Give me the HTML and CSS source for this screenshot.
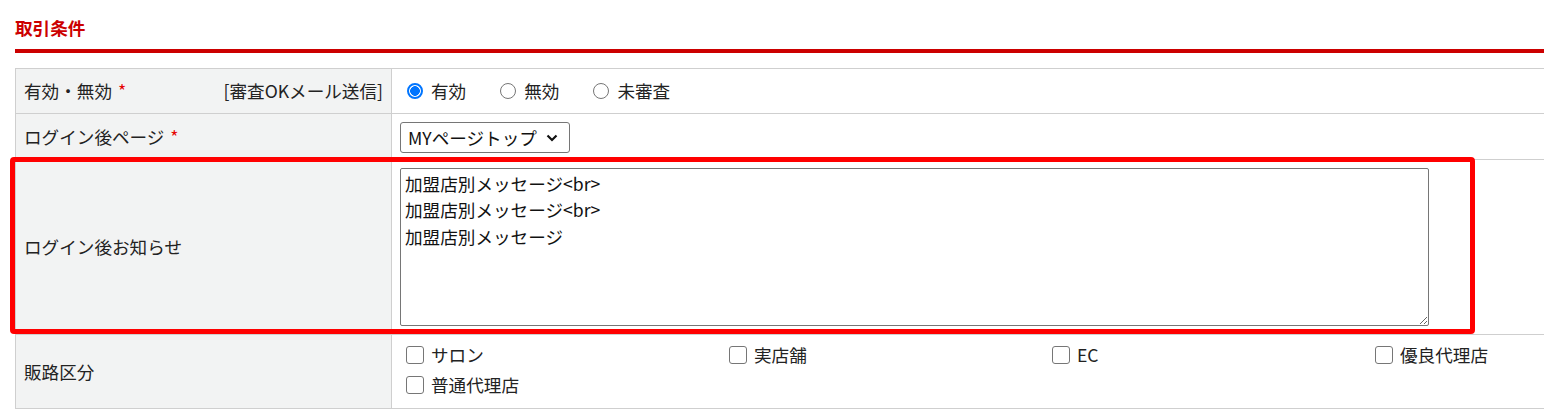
FILE: index.html
```html
<!DOCTYPE html>
<html lang="ja">
<head>
  <meta charset="UTF-8">
  <title>取引条件</title>
  <link rel="stylesheet" href="styles.css">
</head>
<body>
  <h2 class="titulo-seccion">取引条件</h2>

  <div class="form-wrap">
    <table class="form-table">
      <colgroup>
        <col class="col-label">
        <col>
      </colgroup>
      <tr class="fila-estado">
        <th>
          <div class="label-split">
            <span>有効・無効 <em class="req">*</em></span>
            <span>[審査OKメール送信]</span>
          </div>
        </th>
        <td>
          <div class="radios">
            <label><input type="radio" name="estado" checked>有効</label>
            <label><input type="radio" name="estado">無効</label>
            <label><input type="radio" name="estado">未審査</label>
          </div>
        </td>
      </tr>
      <tr class="fila-pagina">
        <th>ログイン後ページ <em class="req">*</em></th>
        <td>
          <span class="select-box">
            <select>
              <option>MYページトップ</option>
            </select>
            <svg class="chevron" width="12" height="8" viewBox="0 0 12 8"><path d="M1.5 1.5 L6 6 L10.5 1.5" fill="none" stroke="#111" stroke-width="2.2"/></svg>
          </span>
        </td>
      </tr>
      <tr class="fila-aviso">
        <th>ログイン後お知らせ</th>
        <td>
          <textarea>加盟店別メッセージ&lt;br&gt;
加盟店別メッセージ&lt;br&gt;
加盟店別メッセージ</textarea>
        </td>
      </tr>
      <tr class="fila-canal">
        <th>販路区分</th>
        <td>
          <div class="checks">
            <label><input type="checkbox">サロン</label>
            <label><input type="checkbox">実店舗</label>
            <label><input type="checkbox">EC</label>
            <label><input type="checkbox">優良代理店</label>
            <label><input type="checkbox">普通代理店</label>
          </div>
        </td>
      </tr>
    </table>

    <!-- marco rojo de la captura -->
    <div class="resaltado"></div>
  </div>
</body>
</html>
```

FILE: styles.css
```css
html {
  overflow: hidden;
}

body {
  margin: 0;
  padding: 0 0 0 15px;
  font-family: "Noto Sans CJK JP", "Noto Sans", sans-serif;
  font-size: 17.6px;
  color: #222;
  background: #fff;
}

.titulo-seccion {
  margin: 0 0 15px 0;
  padding: 15px 0 8px 0;
  font-size: 17.6px;
  line-height: 26px;
  font-weight: bold;
  color: #cc0000;
  border-bottom: 4px solid #cc0000;
}

.form-wrap {
  position: relative;
  width: 1686px;
}

.form-table {
  width: 1686px;
  border-collapse: collapse;
  table-layout: fixed;
  border: 1px solid #cfcfcf;
}

.col-label {
  width: 376px;
}

.form-table th,
.form-table td {
  border: 1px solid #cfcfcf;
  padding: 0 8px;
  vertical-align: middle;
  text-align: left;
  font-weight: normal;
  line-height: 26px;
}

.form-table th {
  background: #f2f3f3;
  color: #222;
}

.form-table td {
  background: #fff;
}

.fila-estado th { height: 44px; }
.fila-pagina th { height: 45px; }
.fila-aviso th { height: 174px; }
.fila-canal th { height: 73px; }

.label-split {
  display: flex;
  justify-content: space-between;
}

.req {
  font-style: normal;
  color: #e60000;
  margin-left: 2px;
}

.radios {
  display: flex;
  gap: 27px;
}

.radios label {
  display: flex;
  align-items: center;
}

.radios input {
  appearance: none;
  -webkit-appearance: none;
  flex-shrink: 0;
  box-sizing: border-box;
  width: 16px;
  height: 16px;
  margin: 0 8px 0 7px;
  border: 1px solid #767676;
  border-radius: 50%;
  background: #fff;
}

.radios input:checked {
  border: 2px solid #0075ff;
  background: radial-gradient(circle, #0075ff 0 4.6px, #fff 5px);
}

.select-box {
  position: relative;
  display: inline-block;
  margin-top: 2px;
}

.select-box select {
  appearance: none;
  -webkit-appearance: none;
  font-family: inherit;
  font-size: 17.6px;
  color: #111;
  width: 170px;
  height: 31px;
  padding: 0 30px 0 7px;
  border: 1px solid #767676;
  border-radius: 3px;
  background: #fff;
  display: block;
}

.chevron {
  position: absolute;
  right: 12px;
  top: 12px;
  pointer-events: none;
}

textarea {
  display: block;
  width: 1029px;
  height: 158px;
  box-sizing: border-box;
  font-family: inherit;
  font-size: 17.6px;
  line-height: 26.4px;
  color: #111;
  padding: 2px 4px;
  border: 1px solid #767676;
  border-radius: 2px;
}

.checks {
  display: grid;
  grid-template-columns: repeat(4, 323px);
  padding: 2px 0 5px 0;
}

.checks label {
  display: flex;
  align-items: center;
  height: 30px;
}

.checks input {
  appearance: none;
  -webkit-appearance: none;
  flex-shrink: 0;
  box-sizing: border-box;
  width: 18px;
  height: 18px;
  margin: 0 7px 0 6px;
  border: 1px solid #767676;
  border-radius: 3px;
  background: #fff;
}

.resaltado {
  position: absolute;
  left: -5px;
  top: 89px;
  width: 1465px;
  height: 177px;
  border: 5px solid #ff0000;
  border-radius: 4px;
  box-sizing: border-box;
  pointer-events: none;
}
```
